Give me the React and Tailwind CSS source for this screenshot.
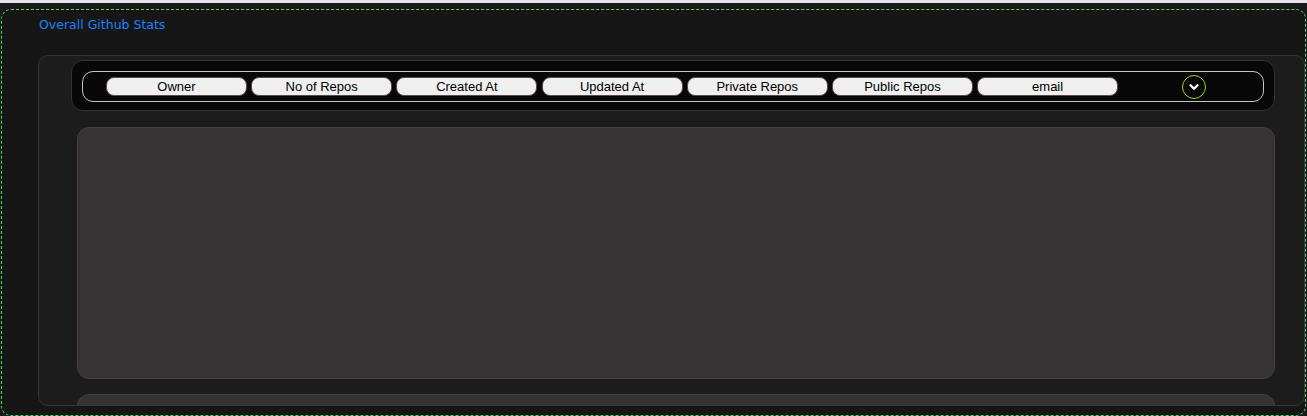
import React from 'react';
import { ChevronDown } from 'lucide-react';

const columns = ['Owner', 'No of Repos', 'Created At', 'Updated At', 'Private Repos', 'Public Repos', 'email'];

const App = () => {
  return (
    <div className="min-h-screen bg-[#1a1a1a] overflow-hidden">
      <div className="h-[3px] bg-[#e4e4ec]" />
      <div className="h-[6px]" />
      {/* Outer stats wrapper */}
      <div className="ml-[1px] w-[1305px] h-[407px] border border-dashed border-[#3ee060] rounded-[10px] bg-[#161616] overflow-hidden">
        <h2
          className="ml-[37px] mt-[5px] h-[19px] text-[12.5px] leading-[19px] text-[#1e80ff]"
          style={{ fontFamily: '"Comic Sans MS", "DejaVu Sans", sans-serif' }}
        >
          Overall Github Stats
        </h2>

        {/* Card */}
        <div className="ml-[36px] mt-[21px] w-[1267px] h-[351px] border border-[#3d3434] rounded-[10px] bg-[#1c1c1c] overflow-hidden pt-[4px] pl-[32px] pr-[29px]">
          {/* Toolbar */}
          <div className="w-[1204px] h-[51px] bg-[#080808] border border-[#3a3030] rounded-[12px] p-[10px]">
            <div className="h-[31px] border border-[#c4c4c4] rounded-[11px] flex items-center pl-[23px]">
              <div className="flex gap-[4.2px]" style={{ fontFamily: '"Liberation Sans", Arial, sans-serif' }}>
                {columns.map((col) => (
                  <button
                    key={col}
                    className="w-[141px] h-[19px] bg-[#efefef] border border-[#5e4848] rounded-[8px] text-[13px] leading-[17px] text-black text-center"
                  >
                    {col}
                  </button>
                ))}
              </div>
              <div className="ml-[64px] w-[24px] h-[24px] rounded-full border-[1.5px] border-[#9fd41f] flex items-center justify-center">
                <ChevronDown className="w-[14px] h-[14px] text-white" strokeWidth={4} />
              </div>
            </div>
          </div>

          {/* Panels */}
          <div className="ml-[6px] mt-[16px] w-[1198px] flex flex-col gap-[15px]">
            <div className="h-[252px] bg-[#353233] border border-[#4b3e3e] rounded-[12px]" />
            <div className="h-[252px] bg-[#353233] border border-[#4b3e3e] rounded-[12px]" />
          </div>
        </div>
      </div>
    </div>
  );
};

export default App;
